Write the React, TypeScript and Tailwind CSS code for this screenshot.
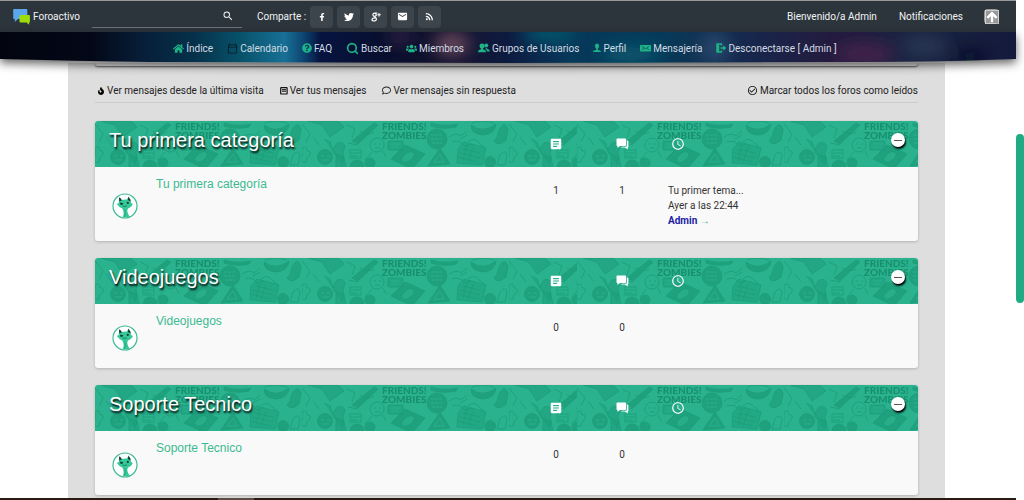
import { useId, type ReactNode } from "react";
import { FaFacebookF, FaFire, FaHome, FaQuestionCircle, FaRegComment, FaTwitter, FaUsers } from "react-icons/fa";
import {
  MdAccessTime,
  MdArrowUpward,
  MdArticle,
  MdCheckCircleOutline,
  MdEmail,
  MdOutlineCalendarToday,
  MdRssFeed,
  MdSearch,
} from "react-icons/md";
import { FiSearch } from "react-icons/fi";

type Forum = {
  title: string;
  topics: number;
  posts: number;
  last?: { topic: string; date: string; author: string };
};

const forums: Forum[] = [
  {
    title: "Tu primera categoría",
    topics: 1,
    posts: 1,
    last: { topic: "Tu primer tema...", date: "Ayer a las 22:44", author: "Admin" },
  },
  { title: "Videojuegos", topics: 0, posts: 0 },
  { title: "Soporte Tecnico", topics: 0, posts: 0 },
];

function GroupIcon() {
  return (
    <svg viewBox="0 0 12 10" className="h-[10px] w-3" fill="currentColor" aria-hidden="true">
      <circle cx="8.2" cy="2.6" r="2" />
      <path d="M7.6 5.2h1.7V6c1.6.3 2.4 1 2.4 2.6H9C8.900 7.200 8.300 6.600 7.200 6.100z" />
      <circle cx="4" cy="3" r="2.5" />
      <path d="M3 5h2v1.200c2 .4 3 1.200 3 3H0c0-1.800 1-2.600 3-3z" />
    </svg>
  );
}

function PersonIcon() {
  return (
    <svg viewBox="0 0 8 10" className="h-[10px] w-2" fill="currentColor" aria-hidden="true">
      <ellipse cx="4" cy="3" rx="2.100" ry="2.500" />
      <path d="M3.200 5h1.600v2C7 7.200 8 7.900 8 9H0c0-1.100 1-1.800 3.200-2z" />
    </svg>
  );
}

function MessageIcon() {
  return (
    <svg viewBox="0 0 11 8" className="h-2 w-[11px]" aria-hidden="true">
      <rect y="1" width="11" height="6.500" rx="1" fill="currentColor" />
      <path d="M2 2.500l3.500 2.300L9 2.500M2 6l2-1.700M9 6L7 4.300" stroke="#06344b" strokeWidth=".6" fill="none" />
    </svg>
  );
}

function LogoutIcon() {
  return (
    <svg viewBox="0 0 10 10" className="size-[10px]" fill="none" stroke="currentColor" aria-hidden="true">
      <path d="M5.500 2.500V1H1v8h4.500V7.500" strokeWidth="1.300" />
      <path d="M1 1l2 1.500v6L1 9z" fill="currentColor" strokeWidth=".5" />
      <path d="M4.500 5h4.500M7.300 3.200L9.200 5 7.300 6.800" strokeWidth="1.300" />
    </svg>
  );
}

function OwnPostsIcon() {
  return (
    <svg viewBox="0 0 8 8" className="size-2" aria-hidden="true">
      <rect x=".7" y=".7" width="6.400" height="6.300" rx=".6" fill="none" stroke="#111" strokeWidth="1.200" />
      <path d="M2 2.700h4M2 4.200h4" stroke="#111" strokeWidth="1" />
    </svg>
  );
}

function GooglePlusIcon() {
  return (
    <svg viewBox="0 0 10 10" className="size-[10px]" fill="none" stroke="currentColor" aria-hidden="true">
      <path d="M6.300 1H4Q1.800 1.200 1.900 2.900 2.100 4.500 4 4.300 5.500 4 5.200 2.500 5 1.500 4 1.100M4 4.300q-.6.8.4 1.300 1.300.7 1 1.900Q4.900 9 3 9 .8 8.900 1 7.500 1.300 6 4.200 5.900" strokeWidth="1.200" />
      <path d="M6.300 2.800h3.500M8 1v3.600" strokeWidth="1" />
    </svg>
  );
}

function PostsIcon() {
  return (
    <svg viewBox="0 0 13 12" className="mx-auto h-3 w-[13px]" fill="#fff" aria-hidden="true">
      <path d="M1.300.5h7.900q.8 0 .8.800v5.900q0 .8-.8.800H4L1.500 10V8Q.5 8 .5 7.200V1.300q0-.8.800-.8z" />
      <path d="M10.800 2.500h.7q.9 0 .9.900v5.300q0 .8-.7.800v2L9 9.500H5l1-.8h4q.8 0 .8-.8z" />
    </svg>
  );
}

function Logo() {
  return (
    <svg viewBox="0 0 18 16" className="h-4 w-[18px]" aria-hidden="true">
      <path d="M1 0h12.500q.8 0 .8.800V10H5l-3.200 3V10H1q-.8 0-.8-.8V.8Q.2 0 1 0z" fill="#5ba6ea" />
      <path d="M7.500 6h8.700q.7 0 .7.700v6q0 .8-.8.800v2.200L13.500 13.500H7.300q-.8 0-.8-.8V6.800q0-.8 1-.8z" fill="#9ddb0a" />
    </svg>
  );
}

function ForumBadge() {
  return (
    <svg viewBox="0 0 26 26" className="size-[26px]" role="img" aria-label="Foro">
      <circle cx="13" cy="13" r="12" fill="#fff" stroke="#3dba94" strokeWidth="1.200" />
      <path
        d="M7 5l2.800 2q2.600-.7 5-.4L16.500 4l2 3.300.5 2.800 1.900 1-1.200 1.900q-1.500 2-3.700 2.400-1.100 1.600-.5 3.800.7 2.700 2.300 4.200-3.400 1.600-7 .9 1.400-3.200.6-6-.5-2-1.400-3-2.800-.7-3.600-2.500L4.800 11l2-1z"
        fill="#35c898"
      />
      <path d="M7 4.600l1.200.2 1.800 2.400-2.700 1.200zM16.400 3.600l2 2.900.1 2-2.600-1.500z" fill="#173c35" />
      <path d="M8.200 9.500l3.100.8-1.200 1.700-1.900-.5z" fill="#173c35" />
      <circle cx="15.800" cy="9.900" r="1.100" fill="#173c35" />
      <path d="M10.500 13q2 .9 4.500-.1" fill="none" stroke="#1b7059" strokeWidth=".8" />
      <path d="M13 16.500q1 3.500-.4 7" fill="none" stroke="#24a981" />
    </svg>
  );
}

function Doodles({ className }: { className: string }) {
  const id = useId();
  return (
    <svg className={className} aria-hidden="true">
      <defs>
        <pattern id={id} width="207" height="46" patternUnits="userSpaceOnUse">
          <rect width="207" height="46" fill="#2ab18e" />
          <g fill="#1a9c78" fillOpacity=".75" stroke="#1a9c78" strokeOpacity=".8" strokeWidth="1">
            <path d="M6 0l14 4 8 12 14-10-6-6zM22 18l6 3 4 12 10 3-2 8" fillOpacity=".5" />
            <path d="M50 20L72 2l4 2-20 19z" />
            <circle cx="23" cy="36" r="7.500" />
            <path d="M19 35h3m3 0h3m-8 4h7" stroke="#2ab18e" fill="none" />
            <path d="M0 27q5-3 5 3 4-1 3 4-4 2-4 7-6 2-4-6z" fill="none" />
            <path d="M34 46V34l-3-6 4-6q6-2 8 3l-2 7 3 14" fillOpacity=".5" />
            <rect x="48" y="29" width="11" height="8" fill="none" />
            <path d="M49 32h9M49 35h7" />
            <circle cx="55" cy="46" r="7" />
            <circle cx="75" cy="24" r="7" fill="none" />
            <path d="M72 23h2m3 0h2m-6 4h5M70 31l-7 8m18-9l3 6" />
            <rect x="86" y="20" width="15" height="9" rx="1" fillOpacity=".5" />
            <path d="M89 23h9m-9 3h7" stroke="#2ab18e" />
            <path d="M89 38l14-14 20 9-13 15z" />
            <ellipse cx="106" cy="36" rx="7" ry="4" transform="rotate(-35 106 36)" fill="#2ab18e" />
            <path d="M126 45l12-18 10 16z" />
            <path d="M132 41l6-8 4 8z" stroke="#2ab18e" fill="none" />
            <path d="M129 2q12 4 27 1l-2 3q-13 3-25-1z" />
            <circle cx="135" cy="18" r="10" />
            <path d="M129 14h12m-12 4h12m-11 4h10" stroke="#2ab18e" strokeDasharray="3 1" />
            <path d="M147 16q8-5 12-1l6-5m-15 11q8-3 12 4l7-2m-11-5l7-4M166 21q6-5 10 0l6 5" fill="none" />
            <path d="M156 28l6-7 22 6-4 17-25-2z" fillOpacity=".4" />
            <path d="M160 28l18 4m-20 0l20 5m-22-1l20 5M165 24l-4 16m10-14l-5 15" fill="none" />
            <path d="M169 4q12 9 25-1-1 10-13 11-12-1-12-10z" />
            <path d="M170 2q10-4 22 0" fill="none" />
            <circle cx="188" cy="41" r="5.500" />
            <path d="M197 9q6-11 9 0l-2 10q-8 7-12 1l3-4z" fillOpacity=".6" />
            <path d="M198 34q5-6 7 0l-2 10h-8z" fill="none" />
            <circle cx="68" cy="42" r="5" />
            <path d="M58 10q8 5 14 1M45 4l8 4-3 9m-4 5l10 2M0 3l8 10-4 8m7-5l6 8" fill="none" />
          </g>
          <g fill="#17906e" fontFamily="Lato, sans-serif" fontWeight="900" fontSize="10">
            <text x="80" y="9">FRIENDS!</text>
            <text x="80" y="18">ZOMBIES</text>
          </g>
        </pattern>
      </defs>
      <rect width="100%" height="100%" fill={`url(#${id})`} />
    </svg>
  );
}

function NebulaBand() {
  return (
    <svg
      className="absolute inset-0 h-full w-full overflow-visible drop-shadow-[0_4px_5px_rgba(0,0,0,0.6)]"
      viewBox="0 0 1016 31"
      preserveAspectRatio="none"
      aria-hidden="true"
    >
      <defs>
        <linearGradient id="sky">
          <stop offset="0" stopColor="#02040f" />
          <stop offset=".09" stopColor="#030818" />
          <stop offset=".14" stopColor="#071e38" />
          <stop offset=".19" stopColor="#06304a" />
          <stop offset=".235" stopColor="#075168" />
          <stop offset=".28" stopColor="#187096" />
          <stop offset=".298" stopColor="#0d4773" />
          <stop offset=".315" stopColor="#071440" />
          <stop offset=".38" stopColor="#080f2e" />
          <stop offset=".45" stopColor="#15132f" />
          <stop offset=".5" stopColor="#0d1b40" />
          <stop offset=".56" stopColor="#06385a" />
          <stop offset=".65" stopColor="#053a59" />
          <stop offset=".69" stopColor="#123252" />
          <stop offset=".74" stopColor="#17264c" />
          <stop offset=".82" stopColor="#241b3e" />
          <stop offset=".9" stopColor="#192442" />
          <stop offset="1" stopColor="#141a3b" />
        </linearGradient>
        <filter id="haze" x="-50%" y="-50%" width="200%" height="200%">
          <feGaussianBlur stdDeviation="8" />
        </filter>
        <clipPath id="band">
          <path d="M0 0H1016V27Q940 30 860 30L508 31 150 30Q75 29 0 27z" />
        </clipPath>
      </defs>
      <g clipPath="url(#band)">
        <rect width="1016" height="31" fill="url(#sky)" />
        <g filter="url(#haze)">
          <ellipse cx="452" cy="12" rx="18" ry="12" fill="#63445a" />
          <ellipse cx="400" cy="5" rx="12" ry="8" fill="#302044" />
          <ellipse cx="548" cy="2" rx="26" ry="7" fill="#056075" />
          <ellipse cx="630" cy="22" rx="30" ry="8" fill="#075a70" />
          <ellipse cx="715" cy="16" rx="14" ry="16" fill="#25476c" />
          <ellipse cx="865" cy="22" rx="30" ry="10" fill="#44204b" />
          <ellipse cx="925" cy="14" rx="22" ry="9" fill="#293855" />
          <ellipse cx="970" cy="25" rx="18" ry="6" fill="#0b0c20" />
        </g>
      </g>
    </svg>
  );
}

function NavLink({ icon, children }: { icon: ReactNode; children: ReactNode }) {
  return (
    <a href="#" className="flex items-center gap-[2px] text-[#d3dbe2]">
      <span className="text-[#1eb386]">{icon}</span>
      {children}
    </a>
  );
}

function ShareButton({ label, children }: { label: string; children: ReactNode }) {
  return (
    <a
      href="#"
      aria-label={label}
      className="flex h-[22px] w-[23px] items-center justify-center rounded-sm bg-[#3c454b] text-white"
    >
      {children}
    </a>
  );
}

function ForumCard({ forum }: { forum: Forum }) {
  return (
    <section className="overflow-hidden rounded-[3px] bg-[#f9f9f9] shadow-[0_1px_3px_rgba(0,0,0,0.2)]">
      <div className="relative">
        <div className="absolute inset-x-0 top-0 flex h-[46px]">
          <Doodles className="h-full flex-1" />
          <Doodles className="h-full w-[341px]" />
        </div>
        <table className="relative w-full table-fixed border-collapse">
          <colgroup>
            <col />
            <col className="w-11" />
            <col className="w-[88px]" />
            <col className="w-[252px]" />
          </colgroup>
          <thead>
            <tr className="h-[46px] text-white">
              <th className="pb-2 pl-[14px] text-left align-middle font-normal">
                <h2 className="font-['Liberation_Sans',sans-serif] text-xl leading-6 [text-shadow:1px_2px_2px_#000]">
                  {forum.title}
                </h2>
              </th>
              <th aria-label="Temas">
                <MdArticle className="mx-auto size-[14px]" />
              </th>
              <th aria-label="Mensajes">
                <PostsIcon />
              </th>
              <th aria-label="Último mensaje">
                <div className="flex items-center justify-between pr-[13px] pl-[5px]">
                  <MdAccessTime className="size-[14px]" />
                  <button
                    type="button"
                    aria-label="Contraer"
                    className="mb-2 flex size-[14px] items-center justify-center rounded-full bg-white shadow-[1px_2px_2px_#000]"
                  >
                    <span className="h-px w-2 bg-[#555]" />
                  </button>
                </div>
              </th>
            </tr>
          </thead>
          <tbody>
            <tr className="h-16 align-top">
              <td className="relative pl-[61px]">
                <div className="absolute inset-y-0 left-[17px] flex items-center pt-1">
                  <ForumBadge />
                </div>
                <a
                  href="#"
                  className="mt-[9px] block font-['Liberation_Sans',sans-serif] text-xs leading-4 text-[#3bb991]"
                >
                  {forum.title}
                </a>
              </td>
              <td className="pt-4 text-center leading-[15px]">{forum.topics}</td>
              <td className="pt-4 text-center leading-[15px]">{forum.posts}</td>
              <td className="pl-[2px] leading-[15px]">
                {forum.last && (
                  <div className="pt-4 pb-[13px]">
                    <a href="#" className="block">{forum.last.topic}</a>
                    <p>{forum.last.date}</p>
                    <p>
                      <a href="#" className="font-bold text-[#2222a5]">{forum.last.author}</a>{" "}
                      <a
                        href="#"
                        aria-label="Ver último mensaje"
                        className="font-['Liberation_Sans',sans-serif] font-bold text-[#2bb88d]"
                      >
                        →
                      </a>
                    </p>
                  </div>
                )}
              </td>
            </tr>
          </tbody>
        </table>
      </div>
    </section>
  );
}

export default function App() {
  return (
    <div className="relative h-screen overflow-hidden bg-white font-[Roboto,sans-serif] text-[10px] leading-[15px] text-[#333]">
      <div className="flex h-full flex-col pr-2">
        <header className="relative z-10">
          <div className="flex h-8 items-center border-t border-[#999] bg-[#2d353c] pr-[17px] pl-[13px] text-[#f1f3f4]">
            <a href="#" className="flex items-center gap-[2px]">
              <Logo />
              Foroactivo
            </a>
            <form className="ml-3 flex h-[22px] w-[150px] items-center border-b border-[#69727a] pr-2">
              <input type="search" aria-label="Buscar" className="min-w-0 flex-1 bg-transparent outline-none" />
              <button type="submit" aria-label="Buscar">
                <MdSearch className="size-3" />
              </button>
            </form>
            <div className="ml-[15px] flex items-center gap-1">
              <span>Comparte :</span>
              <ShareButton label="Facebook"><FaFacebookF className="size-2" /></ShareButton>
              <ShareButton label="Twitter"><FaTwitter className="size-[10px]" /></ShareButton>
              <ShareButton label="Google+"><GooglePlusIcon /></ShareButton>
              <ShareButton label="Correo"><MdEmail className="size-[11px]" /></ShareButton>
              <ShareButton label="RSS"><MdRssFeed className="size-[11px]" /></ShareButton>
            </div>
            <div className="ml-auto flex items-center">
              <a href="#">Bienvenido/a Admin</a>
              <a href="#" className="ml-[22px]">Notificaciones</a>
              <button
                type="button"
                aria-label="Subir"
                className="ml-[21px] flex size-[15px] items-center justify-center rounded-sm bg-[#999] text-white"
              >
                <MdArrowUpward className="size-[14px] stroke-current stroke-2" />
              </button>
            </div>
          </div>
          <div className="relative h-[31px]">
            <NebulaBand />
            <nav className="relative flex h-8 items-center justify-center gap-[14px] pr-[6px]">
              <NavLink icon={<FaHome className="size-[11px]" />}>Índice</NavLink>
              <NavLink icon={<MdOutlineCalendarToday className="size-[11px] text-[#081a22]" />}>Calendario</NavLink>
              <NavLink icon={<FaQuestionCircle className="size-[10px]" />}>FAQ</NavLink>
              <NavLink icon={<FiSearch className="size-[13px]" strokeWidth={3} />}>Buscar</NavLink>
              <NavLink icon={<FaUsers className="size-[11px]" />}>Miembros</NavLink>
              <NavLink icon={<GroupIcon />}>Grupos de Usuarios</NavLink>
              <NavLink icon={<PersonIcon />}>Perfil</NavLink>
              <NavLink icon={<MessageIcon />}>Mensajería</NavLink>
              <NavLink icon={<LogoutIcon />}>Desconectarse [ Admin ]</NavLink>
            </nav>
          </div>
        </header>

        <main className="mr-[71px] ml-[68px] min-h-0 flex-1 overflow-hidden bg-[#dedede] px-[27px]">
          <div className="h-[3px] rounded-b-sm bg-[#e4e4e4] shadow-[0_1px_2px_rgba(0,0,0,0.6)]" />
          <div className="mt-[17px] flex justify-between border-b border-[#cbcbcb] pb-1 text-[#222]">
            <div className="flex gap-4 pl-[2px]">
              <a href="#" className="flex items-center gap-[2px]">
                <FaFire className="size-2 text-black" />
                Ver mensajes desde la última visita
              </a>
              <a href="#" className="flex items-center gap-[2px]">
                <OwnPostsIcon />
                Ver tus mensajes
              </a>
              <a href="#" className="flex items-center gap-[2px]">
                <FaRegComment className="size-[9px]" />
                Ver mensajes sin respuesta
              </a>
            </div>
            <a href="#" className="flex items-center gap-[2px]">
              <MdCheckCircleOutline className="size-[11px]" />
              Marcar todos los foros como leídos
            </a>
          </div>
          <div className="mt-[18px] flex flex-col gap-[17px]">
            {forums.map((forum) => (
              <ForumCard key={forum.title} forum={forum} />
            ))}
          </div>
        </main>
        <footer className="h-[2px] bg-[#2a1a14]">
          <div className="ml-[218px] h-full w-9 bg-[#5b4c44]" />
        </footer>
      </div>
      <div className="absolute top-[134px] right-0 h-[169px] w-2 rounded-full bg-[#1fac84]" />
    </div>
  );
}
